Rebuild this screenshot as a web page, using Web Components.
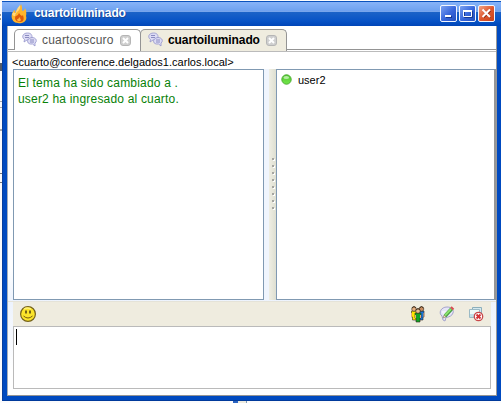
<!DOCTYPE html>
<html lang="es"><head><meta charset="utf-8"><title>cuartoiluminado</title>
<style>
body{margin:0;width:501px;height:403px;overflow:hidden;font:12px "Liberation Sans",Arial,sans-serif;
background:linear-gradient(#2b64c2,#2b64c2) 233px 401px/5px 2px no-repeat,linear-gradient(#efecdf,#efecdf) 238px 401px/8px 2px no-repeat,linear-gradient(#8099b2,#8099b2) 246px 401px/1px 2px no-repeat,linear-gradient(#999,#999) 0 14px/1px 2px no-repeat,linear-gradient(#999,#999) 0 18px/1px 2px no-repeat,linear-gradient(#555b66,#555b66) 0 63px/2px 8px no-repeat,linear-gradient(#aaa,#aaa) 0 101px/2px 1px no-repeat,linear-gradient(#aaa,#aaa) 0 107px/2px 1px no-repeat,linear-gradient(#aaa,#aaa) 0 129px/2px 2px no-repeat,linear-gradient(#777,#777) 0 173px/2px 1px no-repeat,linear-gradient(#777,#777) 0 182px/2px 1px no-repeat,#fbfbfc}
</style></head><body><chat-window></chat-window>
<script>
function define(name, html){
  customElements.define(name, class extends HTMLElement{
    constructor(){super();this.attachShadow({mode:'open'}).innerHTML=html;}
  });
}
define('flame-logo', `<style>:host{display:block;width:17px;height:20px}svg{display:block}</style>
<svg width="17" height="20" viewBox="0 0 17 20"><path d="M10 0C12 4 10 6 12 7Q14 6 14 4Q16 7 15 12C17 18 10 20 7 19C1 19-1 12 2 8Q3 6 4 6Q4 9 5 9C4 5 9 4 10 0Z" fill="#ffb52d"/><path d="M9 1Q10 5 6 8Q4 10 4 12Q0 12 2 8Q4 10 5 8Q6 4 9 1Z" fill="#ffda83"/><path d="M8 9Q9 11 11 12L12 11Q14 17 10 18Q4 18 4 14Q4 12 5 12Q7 12 8 9Z" fill="#df5c0b"/><path d="M9 13Q9 15 10 16Q9 18 7 17Q5 15 7 15Z" fill="#ffb64b"/></svg>`);
define('caption-button', `<style>
:host{display:block;box-sizing:border-box;width:17px;height:17px;border:1px solid #f2f6ff;border-radius:2px;background:linear-gradient(135deg,#7ba1f0,#3665db 55%,#2450be)}
:host([kind=close]){background:linear-gradient(135deg,#f0a487,#df5930 50%,#c84118)}
svg{display:none}:host([kind=min]) .min,:host([kind=max]) .max,:host([kind=close]) .close{display:block}</style>
<svg class="min" width="15" height="15"><path d="M5 11h6" stroke="#16378d" stroke-width="2"/><path d="M4 10h6" stroke="#fff" stroke-width="2"/></svg>
<svg class="max" width="15" height="15"><path d="M4.500 5.500h8v6h-8z" fill="none" stroke="#17388f"/><path d="M3.500 4.500h8v6h-8z" fill="none" stroke="#fff"/><path d="M3 5h9" stroke="#fff" stroke-width="2"/></svg>
<svg class="close" width="15" height="15"><path d="M4.500 4.500l7 7M11.500 4.500l-7 7" stroke="#8d2c14" stroke-width="2"/><path d="M3.500 3.500l7.500 7.500M11 3.500l-7.500 7.500" stroke="#fff" stroke-width="2"/></svg>`);
define('title-bar', `<style>
:host{display:flex;box-sizing:border-box;height:25px;padding:3px 6px 0 9px;background:linear-gradient(#0b52bd 0 1px,#87b3f8 1px,#6ea1ef 10px,#80a9e7 11px,#1b63c8 11px,#0753c6 20px,#0046b8)}
b{color:#fff;font-size:12px;line-height:19px;margin-left:6px;letter-spacing:-.1px;text-shadow:1px 1px #174a9c}
.buttons{display:flex;gap:2px;margin:1px 0 0 auto}</style>
<flame-logo></flame-logo><b><slot></slot></b><div class="buttons"><caption-button kind="min"></caption-button><caption-button kind="max"></caption-button><caption-button kind="close"></caption-button></div>`);
define('room-tab', `<style>
:host{display:flex;box-sizing:border-box;height:21px;border:1px solid #949494;border-bottom:0;border-radius:5px 5px 0 0;padding:2px 9px 0 7px;background:#fff;color:#555;font-size:12px}
:host([active]){background:#efecdf;color:#000;font-weight:bold;height:22px;margin-left:-1px}
span{margin:0 0 0 5px;line-height:16px;letter-spacing:var(--tracking,.18px);white-space:nowrap}
.x{margin:3px 0 0 auto}</style>
<svg width="15" height="16" viewBox="0 0 15 16"><g fill="#dddcf5" stroke="#9393ca" stroke-width=".8"><path d="M5.500 1C9 1 10 3 10 4.500S8 8 5 8L2 10 2.500 7.500C-1 5 1 1 5.500 1Z"/><path d="M10 5.500C13.500 5.500 15 8 14 10L13 11V14L10.500 12C4 13 4 6 10 5.500Z"/></g><path d="M3 3.500h4M3 5.500h4M8 8h4M8 10h4" stroke="#7777b4" stroke-width=".8"/></svg>
<span><slot></slot></span>
<svg class="x" width="11" height="11"><path d="M3 .5h5Q10.500.5 10.500 3v5Q10.500 10.500 8 10.500H3Q.5 10.500.5 8V3Q.5.5 3 .5Z" fill="#cfcfcf" stroke="#b5b5b5"/><path d="M3 3l5 5M8 3l-5 5" stroke="#fff" stroke-width="2"/></svg>`);
define('tab-strip', `<style>
:host{display:flex;box-sizing:border-box;height:26px;padding:3px 0 0 6px;background:linear-gradient(#949494,#949494) 0 23px/100% 1px no-repeat,linear-gradient(#bbb,#bbb) 0 25px/100% 1px no-repeat,#fff}</style><slot></slot>`);
define('message-log', `<style>:host{display:block;box-sizing:border-box;width:251px;border:1px solid #8099b2;background:#fff;color:#078107;font-size:12px;line-height:16px;padding:5px 0 0 4px;letter-spacing:.19px}</style><slot></slot>`);
define('split-divider', `<style>
:host{display:flex;flex-direction:column;align-items:center;box-sizing:border-box;width:12px;padding:89px 0 0 6px;gap:5px;background:linear-gradient(90deg,#f0f5fd 0 5px,#efeee3 5px,#dedfd1)}
i{width:2px;height:2px;background:#a5a5a0;box-shadow:1px 1px #fff}</style><i></i><i></i><i></i><i></i><i></i><i></i><i></i><i></i>`);
define('user-list', `<style>:host{display:block;box-sizing:border-box;flex:1;border:1px solid #8099b2;border-right:2px solid #969696;background:#fff;padding:4px 0 0 4px;font-size:11px}
div{display:flex;gap:6px;line-height:13px}</style>
<div><svg width="11" height="11"><defs><linearGradient id="g" x2="0" y2="1"><stop stop-color="#54c634"/><stop offset="1" stop-color="#72e749"/></linearGradient></defs><circle cx="5.500" cy="5.500" r="4.700" fill="url(#g)" stroke="#4cad32"/><ellipse cx="5.300" cy="3.500" rx="2.800" ry="1.500" fill="#b5eda2"/></svg><slot></slot></div>`);
define('smiley-icon', `<style>:host{display:block;width:16px;height:16px}svg{display:block}</style><svg width="16" height="16"><circle cx="8" cy="8" r="7.400" fill="#fbe42a" stroke="#74611b" stroke-width="1.200"/><path d="M4 3Q7 1 11 3" stroke="#fff179" stroke-width="1.500" fill="none"/><path d="M6 4.500v3M10 4.500v3" stroke="#554510" stroke-width="1.600"/><path d="M3.500 10Q8 14 12.500 10" fill="none" stroke="#765b0f"/></svg>`);
define('people-icon', `<style>:host{display:block;width:16px;height:17px}svg{display:block}</style><svg width="16" height="17" viewBox="0 0 16 17"><g stroke="#332a20" stroke-width=".6"><path d="M1.500 5h5v9h-4v-3h-1Z" fill="#ffe500"/><circle cx="4" cy="3" r="2.300" fill="#e9b181"/><path d="M9 5H14V11H13V14H9Z" fill="#1976d6"/><circle cx="11.500" cy="3" r="2.300" fill="#c68b60"/><path d="M5 7h6v5h-1V16H6V12H5Z" fill="#12a323"/><circle cx="8" cy="5" r="2.300" fill="#edbd8d"/></g><path d="M2 2Q4-1 6 2M9.500 2Q11.500-1 13.500 2M6 4Q8 1 10 4" fill="none" stroke="#42301e"/><path d="M1.500 7v4M14 7v4M5.500 9v3M10.500 9v3" stroke="#e3a779"/></svg>`);
define('edit-topic-icon', `<style>:host{display:block;width:16px;height:16px}svg{display:block}</style><svg width="16" height="16"><path d="M8 1C13 1 15 4 14 7S10 11 7 11.500L6 15 4 14 3 10C-1 7 2 1 8 1Z" fill="#e5e5f7" stroke="#a5a4cc"/><path d="M3 6h6M4 8h4" stroke="#fff"/><path d="M6 10L12.500 3" stroke="#3e983d" stroke-width="3.500"/><path d="M6 9.500L12 3" stroke="#8be16d" stroke-width="2"/><path d="M4 12l1-3 2 2Z" fill="#f6dfb3" stroke="#6b7159" stroke-width=".5"/><path d="M12 1l2.500 2.500" stroke="#d94d50" stroke-width="2"/></svg>`);
define('leave-room-icon', `<style>:host{display:block;width:16px;height:16px}svg{display:block}</style><svg width="16" height="16"><path d="M4.500 1.500h9v8h-9z" fill="#d4e9ef" stroke="#8caebb"/><path d="M1.500 3.500h10v8h-10z" fill="#c0dfe8" stroke="#9bbac5"/><path d="M2 4h9v4H2z" fill="#eefafa"/><circle cx="10.500" cy="10.500" r="4.200" fill="#fff" stroke="#c8484b" stroke-width="1.300"/><path d="M8.500 8.500l4 4M12.500 8.500l-4 4" stroke="#d43337" stroke-width="2"/></svg>`);
define('tool-bar', `<style>:host{display:flex;box-sizing:border-box;height:24px;padding:4px 7px 0 7px;background:#efecdf}.right{display:flex;gap:13px;margin-left:auto}</style><smiley-icon></smiley-icon><div class="right"><people-icon></people-icon><edit-topic-icon></edit-topic-icon><leave-room-icon></leave-room-icon></div>`);
define('message-input', `<style>:host{display:block;box-sizing:border-box;height:63px;border:1px solid #bababa;background:#fff;padding:2px}i{display:block;width:1px;height:16px;background:#000}</style><i></i>`);
define('chat-window', `<style>
:host{display:block;box-sizing:border-box;width:499px;height:400px;margin:1px 0 0 2px;background:#004ac0;border-left:1px solid #073f9e;border-bottom:1px solid #003a9b}
title-bar{margin-left:-1px}
main{box-sizing:border-box;width:490px;height:370px;margin-left:4px;background:linear-gradient(#fff 240px,#edf3fd 276px,#fff 345px);border-left:1px solid #a7afb8;border-right:1px solid #999;border-bottom:1px solid #949494;display:flex;flex-direction:column}
.address{height:17px;line-height:20px;padding-left:4px;font-size:11px;white-space:nowrap;letter-spacing:.02px}
.panes{display:flex;height:231px;padding-left:5px}
.rule{height:1px;margin:1px 0 0;background:#e5e3d8}
tool-bar,message-input{margin:0 5px}</style>
<title-bar>cuartoiluminado</title-bar>
<main><tab-strip><room-tab style="width:127px">cuartooscuro</room-tab><room-tab active style="width:147px;--tracking:-.1px">cuartoiluminado</room-tab></tab-strip>
<div class="address">&lt;cuarto@conference.delgados1.carlos.local&gt;</div>
<div class="panes"><message-log><div>El tema ha sido cambiado a .</div><div>user2 ha ingresado al cuarto.</div></message-log><split-divider></split-divider><user-list>user2</user-list></div>
<div class="rule"></div><tool-bar></tool-bar><message-input></message-input></main>`);
</script></body></html>
